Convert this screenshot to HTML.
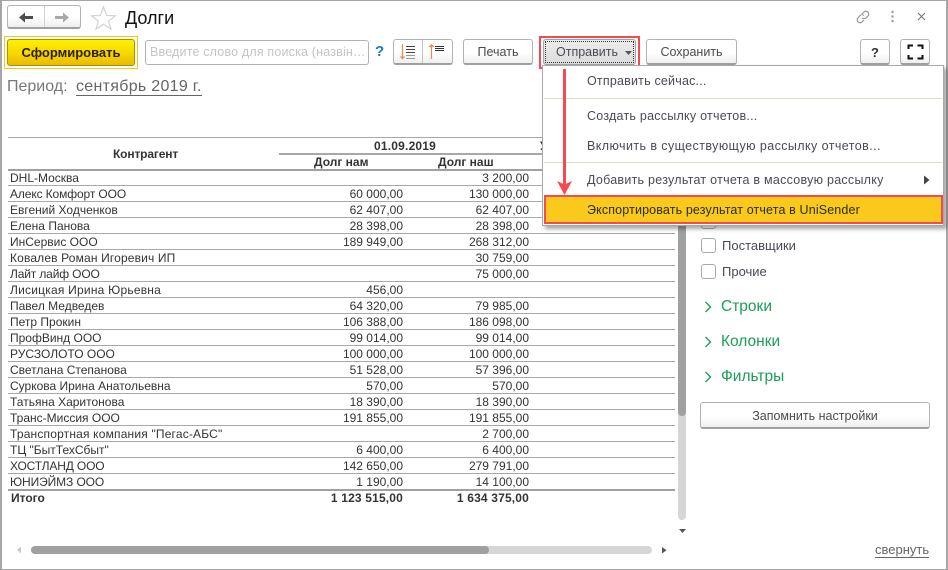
<!DOCTYPE html>
<html><head><meta charset="utf-8">
<style>
*{box-sizing:border-box}
html,body{margin:0;padding:0}
body{width:948px;height:570px;position:relative;overflow:hidden;background:#fff;font-family:"Liberation Sans",sans-serif;font-size:12px;color:#333}
.a{position:absolute}
.btn{position:absolute;border:1px solid #b3b3b3;border-bottom:2px solid #a0a0a0;border-radius:3px;background:linear-gradient(#fff 55%,#efefef);text-align:center;color:#4b4b4b;font-size:12.5px}
.t{position:absolute;white-space:nowrap;line-height:16px;height:16px;font-size:12px;color:#333;margin-top:1px}
.h{margin-top:0}
.r{text-align:right}
.b{font-weight:bold}
.tot{letter-spacing:.17px}
.ln{position:absolute;height:1px;background:#a8a8a8;left:8px;width:667px}
.m{position:absolute;left:587px;font-size:12.5px;color:#4a4a55;white-space:nowrap;line-height:16px}
.cb{position:absolute;left:701px;width:15px;height:15px;border:1px solid #aaa;border-radius:3px;background:#fff}
.g{position:absolute;left:721px;font-size:15.5px;color:#1a9e55;line-height:18px}
.l13{font-size:13px;color:#4a4a55;margin-top:0}
</style></head>
<body>
<!-- window border -->
<div class="a" style="left:0;top:0;width:948px;height:570px;border:1px solid #a6a6a6;border-left-width:2px;border-right-width:2px"></div>

<!-- nav -->
<div class="btn" style="left:7px;top:5px;width:74px;height:24px;background:linear-gradient(#fff 50%,#eee)"></div>
<div class="a" style="left:44px;top:6px;width:1px;height:21px;background:#d0d0d0"></div>
<svg class="a" style="left:0;top:0" width="120" height="30"><path d="M19 17.500l6-5v3.500h8v3h-8v3.500z" fill="#4d4d4d"/><path d="M69 17.500l-6-5v3.500h-8v3h8v3.500z" fill="#a8a8a8"/><path d="M103.500 7l3.100 8.500 8.900.3-7 5.400 2.500 7.800-7.500-4.700-7.500 4.700 2.500-7.800-7-5.400 8.900-.3z" fill="#fff" stroke="#cfcfcf" stroke-width="1.100"/></svg>
<div class="a" style="left:125px;top:8px;font-size:18px;line-height:20px;color:#111">Долги</div>

<!-- top right icons -->
<svg class="a" style="left:855px;top:9px" width="16" height="16"><path d="M7 5l2.500-2.500a3 3 0 0 1 4 4L11 9a3 3 0 0 1-4 0" stroke="#8a8a8a" stroke-width="1" fill="none"/><path d="M9 6.500a3 3 0 0 0-4 0L2.500 9.500a3 3 0 0 0 4 4L9 11" stroke="#8a8a8a" stroke-width="1" fill="none"/></svg>
<svg class="a" style="left:850px;top:5px" width="90" height="22"><circle cx="42.500" cy="7" r="1.200" fill="#999"/><circle cx="42.500" cy="11.500" r="1.200" fill="#999"/><circle cx="42.500" cy="16" r="1.200" fill="#999"/><path d="M68 8l7 7M75 8l-7 7" stroke="#777" stroke-width="1.100"/></svg>

<!-- form button -->
<div class="a" style="left:4px;top:36px;width:134px;height:33px;border:1px solid #f6c90e"></div>
<div class="a" style="left:7px;top:39px;width:128px;height:27px;border:1px solid #a98f0a;border-radius:3px;background:linear-gradient(#fff000,#f7d800 50%,#eabb00);text-align:center;font-weight:bold;font-size:13px;line-height:25px;color:#2a1d00">Сформировать</div>

<!-- search -->
<div class="a" style="left:145px;top:40px;width:224px;height:25px;border:1px solid #b3b3b3;border-radius:3px;color:#c4c4c4;font-size:12.500px;letter-spacing:.18px;line-height:23px;padding-left:4px;white-space:nowrap;overflow:hidden">Введите слово для поиска (назвін…</div>
<div class="a" style="left:375px;top:44px;color:#1a7cc0;font-size:15px;font-weight:bold;line-height:16px">?</div>

<!-- sort -->
<div class="btn" style="left:393px;top:39px;width:60px;height:26px"></div>
<div class="a" style="left:422px;top:40px;width:1px;height:23px;background:#c4c4c4"></div>
<svg class="a" style="left:393px;top:39px" width="60" height="26"><path d="M9.500 5v13" stroke="#f2894a" stroke-width="1.200"/><path d="M6.500 17.500h6l-3 3z" fill="#f2894a"/><path d="M13 7.500h9M13 10.500h9M13 13.500h9" stroke="#444" stroke-width="1.100"/><path d="M13 16.500h9M13 19.500h9" stroke="#999" stroke-width="1.100"/><path d="M38.500 7v13" stroke="#f2894a" stroke-width="1.200"/><path d="M35.500 8h6l-3-3z" fill="#f2894a"/><path d="M42 7.500h9M42 9.500h9M42 11.500h9" stroke="#333" stroke-width="1"/></svg>

<div class="btn" style="left:463px;top:39px;width:70px;height:26px;line-height:25px">Печать</div>
<div class="a" style="left:539px;top:36px;width:101px;height:33px;border:2px solid #f54a52"></div>
<div class="a" style="left:543px;top:39px;width:93px;height:26px;border:1px solid #a4a4a4;border-radius:3px;background:linear-gradient(#ececec,#dcdcdc)"></div>
<div class="a" style="left:545px;top:41px;width:89px;height:22px;border:1px dotted #333;line-height:20px;font-size:12.500px;color:#4b4b55;padding-left:10px;white-space:nowrap">Отправить</div>
<svg class="a" style="left:624px;top:50px" width="10" height="6"><path d="M1 1h7l-3.500 4z" fill="#555"/></svg>
<div class="btn" style="left:646px;top:39px;width:91px;height:26px;line-height:25px">Сохранить</div>
<div class="btn" style="left:860px;top:39px;width:30px;height:26px;line-height:25px;font-weight:bold;color:#333;font-size:13px">?</div>
<div class="btn" style="left:900px;top:39px;width:30px;height:26px"></div>
<svg class="a" style="left:900px;top:39px" width="30" height="26"><path d="M8.500 10V6.500h4.500M17.500 6.500H22.500V10M8.500 16v3.500h4.500M17.500 19.500H22.500V16" stroke="#111" stroke-width="2" fill="none"/></svg>

<!-- period -->
<div class="a" style="left:7px;top:78px;font-size:16px;line-height:17px;color:#777;white-space:nowrap">Период:</div>
<div class="a" style="left:76px;top:78px;font-size:16px;letter-spacing:.3px;line-height:17px;color:#666;white-space:nowrap;border-bottom:1px solid #666">сентябрь 2019 г.</div>

<!-- table lines -->
<div class="ln" style="top:137px"></div>
<div class="a" style="left:279px;top:153px;width:396px;height:2px;background:#a8a8a8"></div>
<div class="a" style="left:8px;top:169px;width:667px;height:2px;background:#a0a0a0"></div>
<div class="ln" style="top:185px"></div><div class="ln" style="top:201px"></div><div class="ln" style="top:217px"></div><div class="ln" style="top:233px"></div><div class="ln" style="top:249px"></div><div class="ln" style="top:265px"></div><div class="ln" style="top:281px"></div><div class="ln" style="top:297px"></div><div class="ln" style="top:313px"></div><div class="ln" style="top:329px"></div><div class="ln" style="top:345px"></div><div class="ln" style="top:361px"></div><div class="ln" style="top:377px"></div><div class="ln" style="top:393px"></div><div class="ln" style="top:409px"></div><div class="ln" style="top:425px"></div><div class="ln" style="top:441px"></div><div class="ln" style="top:457px"></div><div class="ln" style="top:473px"></div>
<div class="a" style="left:8px;top:489px;width:667px;height:2px;background:#a0a0a0"></div>

<div class="t b" style="left:113px;top:145px;letter-spacing:-.15px">Контрагент</div>
<div class="t b h" style="left:374px;top:138px;letter-spacing:.2px">01.09.2019</div>
<div class="t b h" style="left:540px;top:138px">У</div>
<div class="t b h" style="left:314px;top:154px">Долг нам</div>
<div class="t b h" style="left:438px;top:154px">Долг наш</div>

<div class="t" style="left:10px;top:169px">DHL-Москва</div><div class="t r" style="left:430px;width:99px;top:169px">3 200,00</div>
<div class="t" style="left:10px;top:185px;letter-spacing:-.12px">Алекс Комфорт ООО</div><div class="t r" style="left:304px;width:99px;top:185px">60 000,00</div><div class="t r" style="left:430px;width:99px;top:185px">130 000,00</div>
<div class="t" style="left:10px;top:201px">Евгений Ходченков</div><div class="t r" style="left:304px;width:99px;top:201px">62 407,00</div><div class="t r" style="left:430px;width:99px;top:201px">62 407,00</div>
<div class="t" style="left:10px;top:217px">Елена Панова</div><div class="t r" style="left:304px;width:99px;top:217px">28 398,00</div><div class="t r" style="left:430px;width:99px;top:217px">28 398,00</div>
<div class="t" style="left:10px;top:233px">ИнСервис ООО</div><div class="t r" style="left:304px;width:99px;top:233px">189 949,00</div><div class="t r" style="left:430px;width:99px;top:233px">268 312,00</div>
<div class="t" style="left:10px;top:249px;letter-spacing:.15px">Ковалев Роман Игоревич ИП</div><div class="t r" style="left:430px;width:99px;top:249px">30 759,00</div>
<div class="t" style="left:10px;top:265px;letter-spacing:-.15px">Лайт лайф ООО</div><div class="t r" style="left:430px;width:99px;top:265px">75 000,00</div>
<div class="t" style="left:10px;top:281px;letter-spacing:.22px">Лисицкая Ирина Юрьевна</div><div class="t r" style="left:304px;width:99px;top:281px">456,00</div>
<div class="t" style="left:10px;top:297px">Павел Медведев</div><div class="t r" style="left:304px;width:99px;top:297px">64 320,00</div><div class="t r" style="left:430px;width:99px;top:297px">79 985,00</div>
<div class="t" style="left:10px;top:313px">Петр Прокин</div><div class="t r" style="left:304px;width:99px;top:313px">106 388,00</div><div class="t r" style="left:430px;width:99px;top:313px">186 098,00</div>
<div class="t" style="left:10px;top:329px">ПрофВинд ООО</div><div class="t r" style="left:304px;width:99px;top:329px">99 014,00</div><div class="t r" style="left:430px;width:99px;top:329px">99 014,00</div>
<div class="t" style="left:10px;top:345px">РУСЗОЛОТО ООО</div><div class="t r" style="left:304px;width:99px;top:345px">100 000,00</div><div class="t r" style="left:430px;width:99px;top:345px">100 000,00</div>
<div class="t" style="left:10px;top:361px">Светлана Степанова</div><div class="t r" style="left:304px;width:99px;top:361px">51 528,00</div><div class="t r" style="left:430px;width:99px;top:361px">57 396,00</div>
<div class="t" style="left:10px;top:377px">Суркова Ирина Анатольевна</div><div class="t r" style="left:304px;width:99px;top:377px">570,00</div><div class="t r" style="left:430px;width:99px;top:377px">570,00</div>
<div class="t" style="left:10px;top:393px">Татьяна Харитонова</div><div class="t r" style="left:304px;width:99px;top:393px">18 390,00</div><div class="t r" style="left:430px;width:99px;top:393px">18 390,00</div>
<div class="t" style="left:10px;top:409px">Транс-Миссия ООО</div><div class="t r" style="left:304px;width:99px;top:409px">191 855,00</div><div class="t r" style="left:430px;width:99px;top:409px">191 855,00</div>
<div class="t" style="left:10px;top:425px;letter-spacing:.18px">Транспортная компания "Пегас-АБС"</div><div class="t r" style="left:430px;width:99px;top:425px">2 700,00</div>
<div class="t" style="left:10px;top:441px">ТЦ "БытТехСбыт"</div><div class="t r" style="left:304px;width:99px;top:441px">6 400,00</div><div class="t r" style="left:430px;width:99px;top:441px">6 400,00</div>
<div class="t" style="left:10px;top:457px;letter-spacing:-.15px">ХОСТЛАНД ООО</div><div class="t r" style="left:304px;width:99px;top:457px">142 650,00</div><div class="t r" style="left:430px;width:99px;top:457px">279 791,00</div>
<div class="t" style="left:10px;top:473px;letter-spacing:-.1px">ЮНИЭЙМЗ ООО</div><div class="t r" style="left:304px;width:99px;top:473px">1 190,00</div><div class="t r" style="left:430px;width:99px;top:473px">14 100,00</div>
<div class="t b" style="left:11px;top:489px">Итого</div><div class="t b r tot" style="left:304px;width:99px;top:489px">1 123 515,00</div><div class="t b r tot" style="left:430px;width:99px;top:489px">1 634 375,00</div>

<!-- scrollbars -->
<div class="a" style="left:678px;top:200px;width:8px;height:320px;background:#d6d6d6;border-radius:4px"></div>
<div class="a" style="left:678px;top:200px;width:8px;height:216px;background:#a0a0a0;border-radius:4px"></div>
<svg class="a" style="left:678px;top:527px" width="10" height="8"><path d="M1 2h7l-3.500 4z" fill="#555"/></svg>
<div class="a" style="left:31px;top:546px;width:621px;height:8px;background:#d6d6d6;border-radius:4px"></div>
<div class="a" style="left:31px;top:546px;width:458px;height:8px;background:#a0a0a0;border-radius:4px"></div>
<svg class="a" style="left:14px;top:545px" width="10" height="10"><path d="M7 1.500v7l-4-3.500z" fill="#c8c8c8"/></svg>
<svg class="a" style="left:660px;top:545px" width="10" height="10"><path d="M2 2v6.500l4.500-3.200z" fill="#555"/></svg>

<!-- right panel -->
<div class="cb" style="top:214px"></div>
<div class="cb" style="top:238px"></div>
<div class="t l13" style="left:722px;top:238px">Поставщики</div>
<div class="cb" style="top:264px"></div>
<div class="t l13" style="left:722px;top:264px">Прочие</div>
<svg class="a" style="left:703px;top:298px" width="12" height="90"><path d="M2.500 4l5 5-5 5M2.500 39l5 5-5 5M2.500 74l5 5-5 5" stroke="#1a9e55" stroke-width="1.400" fill="none"/></svg>
<div class="g" style="top:298px">Строки</div>
<div class="g" style="top:333px">Колонки</div>
<div class="g" style="top:368px">Фильтры</div>
<div class="btn" style="left:700px;top:402px;width:230px;height:27px;line-height:26px">Запомнить настройки</div>
<div class="a" style="left:875px;top:543px;font-size:13px;line-height:14px;color:#666;border-bottom:1px solid #666">свернуть</div>

<!-- dropdown -->
<div class="a" style="left:542px;top:65px;width:402px;height:161px;background:#fff;border:1px solid #a8a8a8;box-shadow:3px 3px 4px rgba(0,0,0,.35)"></div>
<div class="a" style="left:544px;top:98px;width:398px;height:1px;background:#dfd9c9"></div>
<div class="a" style="left:544px;top:162px;width:398px;height:1px;background:#dfd9c9"></div>
<div class="m" style="top:73px;letter-spacing:.2px">Отправить сейчас...</div>
<div class="m" style="top:108px;letter-spacing:.24px">Создать рассылку отчетов...</div>
<div class="m" style="top:138px;letter-spacing:.42px">Включить в существующую рассылку отчетов...</div>
<div class="m" style="top:172px;letter-spacing:.26px">Добавить результат отчета в массовую рассылку</div>
<svg class="a" style="left:923px;top:174px" width="8" height="12"><path d="M1 1.500v9l5.500-4.500z" fill="#444"/></svg>
<div class="a" style="left:544px;top:195px;width:399px;height:29px;background:#f9c91c;border:2px solid #f54a52"></div>
<div class="m" style="top:202px;color:#2e2a10;letter-spacing:.14px">Экспортировать результат отчета в UniSender</div>

<!-- arrow -->
<div class="a" style="left:563px;top:69px;width:3px;height:118px;background:#f54a52"></div>
<svg class="a" style="left:557px;top:180px" width="16" height="16"><path d="M0 1l7.500 3.500L15 1 7.500 15z" fill="#f54a52"/></svg>
</body></html>
